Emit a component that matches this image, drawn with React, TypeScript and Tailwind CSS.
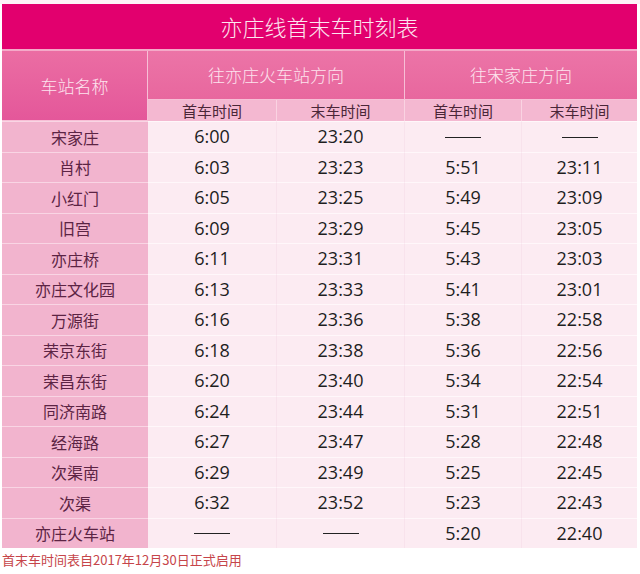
import React from "react";

const rows: [string, string, string, string, string][] = [
  ["宋家庄", "6:00", "23:20", "——", "——"],
  ["肖村", "6:03", "23:23", "5:51", "23:11"],
  ["小红门", "6:05", "23:25", "5:49", "23:09"],
  ["旧宫", "6:09", "23:29", "5:45", "23:05"],
  ["亦庄桥", "6:11", "23:31", "5:43", "23:03"],
  ["亦庄文化园", "6:13", "23:33", "5:41", "23:01"],
  ["万源街", "6:16", "23:36", "5:38", "22:58"],
  ["荣京东街", "6:18", "23:38", "5:36", "22:56"],
  ["荣昌东街", "6:20", "23:40", "5:34", "22:54"],
  ["同济南路", "6:24", "23:44", "5:31", "22:51"],
  ["经海路", "6:27", "23:47", "5:28", "22:48"],
  ["次渠南", "6:29", "23:49", "5:25", "22:45"],
  ["次渠", "6:32", "23:52", "5:23", "22:43"],
  ["亦庄火车站", "——", "——", "5:20", "22:40"],
];

function Dash() {
  return <span className="block w-[36px] h-px bg-[#222] mt-[1px]" />;
}

export default function App() {
  return (
    <div className="w-[640px] h-[574px] bg-white overflow-hidden font-['Noto_Sans_CJK_SC','Noto_Sans',sans-serif]">
      <div className="h-[4px] bg-[#fdf3f7]" />
      <div className="ml-[2px] w-[635px]">
        <div className="h-[47px] bg-[#e2006e] flex items-center justify-center text-[22px] text-[#fde6f0] font-light border-b-2 border-[#f4a9c8]">
          亦庄线首末车时刻表
        </div>
        <div className="grid grid-cols-[146px_129px_128px_117px_115px] grid-rows-[49px_21px]">
          <div className="row-span-2 bg-linear-to-b from-[#eb6da3] to-[#e4579a] flex items-center justify-center text-[17px] text-[#fde4ee] border-r border-b border-[#f7bfd6] font-light">
            车站名称
          </div>
          <div className="col-span-2 bg-linear-to-b from-[#ec74a7] to-[#e8679e] flex items-center justify-center text-[17px] text-[#fde4ee] border-r border-b border-[#f7bfd6] font-light">
            往亦庄火车站方向
          </div>
          <div className="col-span-2 bg-linear-to-b from-[#ec74a7] to-[#e8679e] flex items-center justify-center text-[17px] text-[#fde4ee] border-b border-[#f7bfd6] font-light">
            往宋家庄方向
          </div>
          <div className="bg-[#f4b8d1] flex items-center justify-center text-[15px] text-[#4a2638] leading-none border-r border-[#fad3e2]">首车时间</div>
          <div className="bg-[#f4b8d1] flex items-center justify-center text-[15px] text-[#4a2638] leading-none border-r border-[#fad3e2]">末车时间</div>
          <div className="bg-[#f4b8d1] flex items-center justify-center text-[15px] text-[#4a2638] leading-none border-r border-[#fad3e2]">首车时间</div>
          <div className="bg-[#f4b8d1] flex items-center justify-center text-[15px] text-[#4a2638] leading-none">末车时间</div>
        </div>
        <div className="grid grid-cols-[146px_129px_128px_117px_115px] auto-rows-[30.5px]">
          {rows.map((r, ri) => (
            <React.Fragment key={ri}>
              <div className="bg-[#f2b4ce] flex items-center justify-center text-[16px] text-[#5c2444] border-t border-[#f9d5e4]">
                {r[0]}
              </div>
              {r.slice(1).map((v, ci) => (
                <div
                  key={ci}
                  className={
                    ci < 3
                      ? "bg-[#fcebf2] flex items-center justify-center text-[18px] text-[#1e1e1e] font-['Open_Sans','Noto_Sans_CJK_SC',sans-serif] border-t border-t-[#fff7fa] border-r border-r-[#f8e2ec]"
                      : "bg-[#fcebf2] flex items-center justify-center text-[18px] text-[#1e1e1e] font-['Open_Sans','Noto_Sans_CJK_SC',sans-serif] border-t border-t-[#fff7fa]"
                  }
                >
                  {v === "——" ? <Dash /> : v}
                </div>
              ))}
            </React.Fragment>
          ))}
        </div>
      </div>
      <div className="pl-[2px] pt-[3px] text-[13px] leading-[18px] text-[#c6454a]">
        首末车时间表自2017年12月30日正式启用
      </div>
    </div>
  );
}
